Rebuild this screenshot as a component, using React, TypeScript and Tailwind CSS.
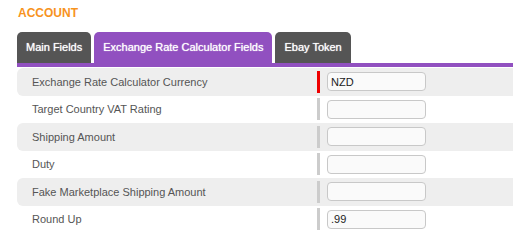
import { useState } from "react";

const tabs = ["Main Fields", "Exchange Rate Calculator Fields", "Ebay Token"];

const fields = [
  { label: "Exchange Rate Calculator Currency", value: "NZD", required: true },
  { label: "Target Country VAT Rating", value: "" },
  { label: "Shipping Amount", value: "" },
  { label: "Duty", value: "" },
  { label: "Fake Marketplace Shipping Amount", value: "" },
  { label: "Round Up", value: ".99" },
];

const App = () => {
  const [active, setActive] = useState(1);

  return (
    <div
      className="w-[513px] h-[250px] overflow-hidden bg-white pl-[17px]"
      style={{ fontFamily: '"Liberation Sans", Arial, sans-serif' }}
    >
      <h1 className="pt-[5px] pl-px text-[12px] font-bold leading-[16px] text-[#f7931e]">ACCOUNT</h1>

      <div className="mt-[11px] flex gap-[3px]">
        {tabs.map((t, i) => (
          <button
            key={t}
            onClick={() => setActive(i)}
            className={
              "h-[31px] rounded-t-[5px] px-[9px] text-[11px] text-white [text-shadow:0_0_1px_rgba(255,255,255,0.9)] " +
              (i === active ? "bg-[#9150c0]" : "bg-[#555555]")
            }
          >
            {t}
          </button>
        ))}
      </div>
      <div className="h-[4px] bg-[#9150c0]" />

      <div className="mt-px">
        {fields.map((f, i) => (
          <div
            key={f.label}
            className={
              "flex h-[27.5px] items-center rounded-l-[6px] pl-[15px] " +
              (i % 2 === 0 ? "bg-[#eeeeee]" : "bg-white")
            }
          >
            <span className="w-[285px] text-[11px] text-[#555555]">{f.label}</span>
            <span className={"h-[22px] w-[3px] " + (f.required ? "bg-[#ee0000]" : "bg-[#cccccc]")} />
            <input
              defaultValue={f.value}
              className="ml-[7px] h-[19px] w-[99px] rounded-[4px] border border-[#c8c8c8] bg-[#fafafa] px-[3px] text-[11px] text-[#222] outline-none"
            />
          </div>
        ))}
      </div>
    </div>
  );
};

export default App;
